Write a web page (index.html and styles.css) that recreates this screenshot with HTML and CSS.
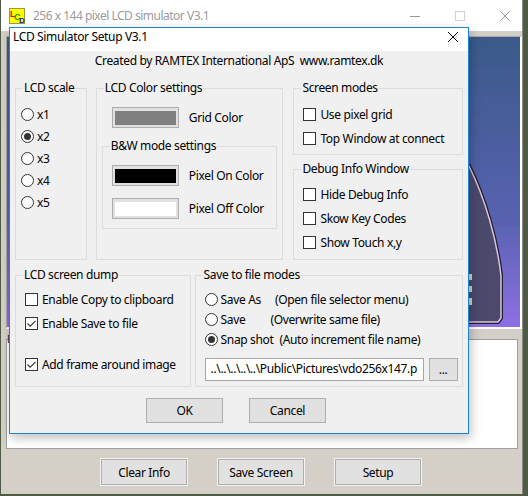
FILE: index.html
```html
<!DOCTYPE html>
<html lang="en">
<head>
<meta charset="utf-8">
<title>LCD Simulator Setup V3.1</title>
<link rel="stylesheet" href="styles.css">
</head>
<body>
<div class="app">
  <div class="app-title">
    <svg class="app-icon" width="16" height="16" viewBox="0 0 16 16">
      <rect x="0.5" y="0.5" width="15" height="15" fill="#ffff00" stroke="#9a9a40"/>
      <text x="1" y="9" font-size="9" font-weight="bold" fill="#e00000" font-family="Liberation Sans, sans-serif">L</text>
      <text x="5" y="12" font-size="9" font-weight="bold" fill="#00a000" font-family="Liberation Sans, sans-serif">C</text>
      <text x="10" y="15" font-size="8" font-weight="bold" fill="#1010e0" font-family="Liberation Sans, sans-serif">D</text>
    </svg>
    <span class="app-title-text">256 x 144 pixel LCD simulator V3.1</span>
    <div class="app-controls">
      <svg width="10" height="10" viewBox="0 0 10 10"><path d="M0 5.5H10" stroke="#9a9a9a" stroke-width="1"/></svg>
      <svg width="10" height="10" viewBox="0 0 10 10"><rect x="0.5" y="0.5" width="9" height="9" fill="none" stroke="#d0d0d0"/></svg>
      <svg width="10" height="10" viewBox="0 0 10 10"><path d="M0 0L10 10M10 0L0 10" stroke="#9a9a9a" stroke-width="1"/></svg>
    </div>
  </div>
  <div class="app-client">
    <div class="lcd">
      <svg class="lcd-img" width="513" height="290" viewBox="7 37 513 290" shape-rendering="crispEdges">
        <rect x="7" y="37" width="513" height="10" fill="#3b5a8b"/>
        <rect x="7" y="47" width="513" height="10" fill="#3d5b8d"/>
        <rect x="7" y="57" width="513" height="10" fill="#3e5b8f"/>
        <rect x="7" y="67" width="513" height="10" fill="#405c91"/>
        <rect x="7" y="77" width="513" height="10" fill="#415c93"/>
        <rect x="7" y="87" width="513" height="10" fill="#435c96"/>
        <rect x="7" y="97" width="513" height="10" fill="#455d98"/>
        <rect x="7" y="107" width="513" height="10" fill="#465d9a"/>
        <rect x="7" y="117" width="513" height="10" fill="#485e9c"/>
        <rect x="7" y="127" width="513" height="10" fill="#4a5e9e"/>
        <rect x="7" y="137" width="513" height="10" fill="#4b5fa0"/>
        <rect x="7" y="147" width="513" height="10" fill="#4d5fa2"/>
        <rect x="7" y="157" width="513" height="10" fill="#4e5fa4"/>
        <rect x="7" y="167" width="513" height="10" fill="#5060a6"/>
        <rect x="7" y="177" width="513" height="10" fill="#5260a8"/>
        <rect x="7" y="187" width="513" height="10" fill="#5361aa"/>
        <rect x="7" y="197" width="513" height="10" fill="#5561ac"/>
        <rect x="7" y="207" width="513" height="10" fill="#5762ae"/>
        <rect x="7" y="217" width="513" height="10" fill="#5962b1"/>
        <rect x="7" y="227" width="513" height="10" fill="#5e64b6"/>
        <rect x="7" y="237" width="513" height="10" fill="#6365bb"/>
        <rect x="7" y="247" width="513" height="10" fill="#6866c0"/>
        <rect x="7" y="257" width="513" height="10" fill="#6d68c4"/>
        <rect x="7" y="267" width="513" height="10" fill="#7269c9"/>
        <rect x="7" y="277" width="513" height="10" fill="#776ace"/>
        <rect x="7" y="287" width="513" height="10" fill="#7c6bd3"/>
        <rect x="7" y="297" width="513" height="10" fill="#816dd8"/>
        <rect x="7" y="307" width="513" height="10" fill="#866edd"/>
        <rect x="7" y="317" width="513" height="10" fill="#8b6fe2"/>
        <path d="M469 166 C485 198 497 240 501 276 L501 318 L498 322 L300 322 L300 166 Z" fill="#4c4a6c" stroke="#1e1e2e" stroke-width="4" shape-rendering="auto"/>
        <path d="M469 166 C485 198 497 240 501 276 L501 318 L498 322 L300 322 L300 166 Z" fill="#4c4a6c" stroke="#dcc4dc" stroke-width="1.5" shape-rendering="auto"/>
        <rect x="469" y="274" width="3" height="6" fill="#d8d0b4"/>
        <rect x="469" y="286" width="3" height="6" fill="#d8d0b4"/>
        <rect x="469" y="298" width="3" height="7" fill="#d8d0b4"/>
      </svg>
    </div>
    <div class="info-caption">D</div>
    <div class="info-box"></div>
    <div class="app-buttons">
      <button class="btn app-btn">Clear Info</button>
      <button class="btn app-btn">Save Screen</button>
      <button class="btn app-btn">Setup</button>
    </div>
  </div>
</div>

<div class="dialog">
  <div class="dlg-title">
    <span class="dlg-title-text">LCD Simulator Setup V3.1</span>
    <svg class="dlg-close" width="10" height="10" viewBox="0 0 10 10"><path d="M0 0L10 10M10 0L0 10" stroke="#000" stroke-width="1"/></svg>
  </div>
  <div class="dlg-body">
    <div class="credits">Created by RAMTEX International ApS&nbsp;&nbsp;www.ramtex.dk</div>

    <div class="row-top">
      <div class="group g-scale">
        <div class="gtitle">LCD scale</div>
        <div class="scale-list">
          <div class="opt"><span class="radio"></span>x1</div>
          <div class="opt"><span class="radio checked"></span>x2</div>
          <div class="opt"><span class="radio"></span>x3</div>
          <div class="opt"><span class="radio"></span>x4</div>
          <div class="opt"><span class="radio"></span>x5</div>
        </div>
      </div>

      <div class="group g-color">
        <div class="gtitle">LCD Color settings</div>
        <div class="swrow sw-first"><span class="swatch"><i class="fill-grid"></i></span><span>Grid Color</span></div>
        <div class="group g-bw">
          <div class="gtitle">B&amp;W mode settings</div>
          <div class="swrow sw-on"><span class="swatch"><i class="fill-on"></i></span><span>Pixel On Color</span></div>
          <div class="swrow sw-off"><span class="swatch"><i class="fill-off"></i></span><span>Pixel Off Color</span></div>
        </div>
      </div>

      <div class="col-right">
        <div class="group g-screen">
          <div class="gtitle">Screen modes</div>
          <div class="checks">
            <div class="chk"><span class="box"></span>Use pixel grid</div>
            <div class="chk"><span class="box"></span>Top Window at connect</div>
          </div>
        </div>
        <div class="group g-debug">
          <div class="gtitle">Debug Info Window</div>
          <div class="checks">
            <div class="chk"><span class="box"></span>Hide Debug Info</div>
            <div class="chk"><span class="box"></span>Skow Key Codes</div>
            <div class="chk"><span class="box"></span>Show Touch x,y</div>
          </div>
        </div>
      </div>
    </div>

    <div class="row-bottom">
      <div class="group g-dump">
        <div class="gtitle">LCD screen dump</div>
        <div class="checks">
          <div class="chk"><span class="box"></span>Enable Copy to clipboard</div>
          <div class="chk"><span class="box"><svg width="11" height="11" viewBox="0 0 11 11"><path d="M1.5 5.5L4.2 8.2L9.5 2.8" fill="none" stroke="#333" stroke-width="1.1"/></svg></span>Enable Save to file</div>
          <div class="chk chk-gap"><span class="box"><svg width="11" height="11" viewBox="0 0 11 11"><path d="M1.5 5.5L4.2 8.2L9.5 2.8" fill="none" stroke="#333" stroke-width="1.1"/></svg></span>Add frame around image</div>
        </div>
      </div>
      <div class="group g-save">
        <div class="gtitle">Save to file modes</div>
        <div class="save-list">
          <div class="sopt"><span class="radio"></span><span class="sname">Save As</span><span class="sdesc d1">(Open file selector menu)</span></div>
          <div class="sopt"><span class="radio"></span><span class="sname">Save</span><span class="sdesc d2">(Overwrite same file)</span></div>
          <div class="sopt"><span class="radio checked"></span><span class="sname">Snap shot</span><span class="sdesc d3">(Auto increment file name)</span></div>
        </div>
        <div class="path-row">
          <div class="path-field"><span class="path-text">..\..\..\..\..\Public\Pictures\vdo256x147.p</span></div>
          <button class="btn browse">...</button>
        </div>
      </div>
    </div>

    <div class="dlg-buttons">
      <button class="btn dlg-btn">OK</button>
      <button class="btn dlg-btn">Cancel</button>
    </div>
  </div>
</div>
</body>
</html>
```

FILE: styles.css
```css
* { box-sizing: border-box; margin: 0; padding: 0; }
html, body { width: 528px; height: 496px; overflow: hidden; }
body {
  background: #4e5a44;
  font-family: "Noto Sans", "Open Sans", sans-serif;
  font-size: 12px;
  letter-spacing: -0.35px;
  color: #000;
  position: relative;
}
button { font: inherit; color: inherit; letter-spacing: inherit; }

/* background application window */
.app {
  margin-left: 1px;
  width: 522px;
  height: 494px;
  background: #d4d0c8;
  border-right: 1px solid #8a8a8a;
}
.app-title {
  height: 31px;
  background: #fff;
  display: flex;
  align-items: center;
}
.app-icon { margin-left: 8px; flex: none; }
.app-title-text {
  margin-left: 8px;
  color: #9b9b9b;
  font-size: 12px;
  letter-spacing: -0.5px;
  line-height: 16px;
}
.app-controls {
  margin-left: auto;
  margin-right: 12px;
  display: flex;
  gap: 35px;
  align-items: center;
}
.app-client { padding: 5px 0 0 5px; }
.lcd {
  width: 516px;
  height: 293px;
  border-top: 1px solid #a8a8a8;
  border-left: 1px solid #a8a8a8;
  border-right: 2px solid #fff;
  border-bottom: 2px solid #fff;
  overflow: hidden;
  background: #3b5a8b;
}
.lcd-img { display: block; }
.info-caption {
  height: 0;
  overflow: visible;
  font-size: 10px;
  line-height: 10px;
  margin-top: 5px;
  padding-left: 1px;
  color: #222;
}
.info-box {
  margin-top: 5px;
  width: 512px;
  height: 110px;
  background: #fff;
  border: 1px solid #a0a0a0;
}
.app-buttons {
  margin-top: 10px;
  display: flex;
  gap: 31px;
  padding-left: 95px;
}
.btn {
  background: #e1e1e1;
  border: 1px solid #adadad;
  cursor: default;
}
.app-btn {
  width: 86px;
  height: 26px;
  box-shadow: 0 0 0 1px #f4f4f4;
}

/* dialog */
.dialog {
  position: absolute;
  left: 9px;
  top: 27px;
  width: 460px;
  height: 407px;
  border: 1px solid #1883d7;
  background: #f0f0f0;
  box-shadow: 2px 4px 10px rgba(0, 0, 0, 0.25);
}
.dlg-title {
  height: 23px;
  background: #fff;
  display: flex;
  align-items: flex-start;
  padding-left: 3px;
}
.dlg-title-text { line-height: 16px; margin-top: 1px; }
.dlg-close { margin-left: auto; margin-right: 10px; margin-top: 4px; }
.dlg-body { padding: 0 5px; }
.credits {
  padding-top: 2px;
  line-height: 16px;
  text-align: center;
}

.group { border: 1px solid #dcdcdc; }
.gtitle {
  margin-top: -9px;
  margin-left: 7px;
  width: fit-content;
  padding: 0 1px;
  line-height: 16px;
  height: 16px;
  background: #f0f0f0;
  white-space: nowrap;
}

.row-top {
  margin-top: 19px;
  display: flex;
  gap: 9px;
  height: 172px;
}
.g-scale { width: 72px; }
.g-color { width: 188px; }
.col-right {
  width: 170px;
  margin-left: 1px;
  display: flex;
  flex-direction: column;
  gap: 14px;
}
.g-screen { height: 67px; }
.g-debug { height: 91px; }

.scale-list { padding-top: 7px; padding-left: 5px; }
.opt { height: 22px; display: flex; align-items: center; }
.radio {
  width: 13px;
  height: 13px;
  border: 1px solid #333;
  border-radius: 50%;
  background: #fff;
  margin-right: 3px;
  flex: none;
  display: flex;
  align-items: center;
  justify-content: center;
}
.radio.checked::after {
  content: "";
  width: 7px;
  height: 7px;
  border-radius: 50%;
  background: #333;
}

.swrow { display: flex; align-items: center; gap: 10px; }
.sw-first { margin-top: 11px; padding-left: 15px; }
.swatch {
  width: 67px;
  height: 21px;
  border: 1px solid #adadad;
  background: #e1e1e1;
  padding: 3px 2px 2px;
  display: block;
  flex: none;
}
.swatch i { display: block; width: 100%; height: 100%; }
.fill-grid { background: #808080; }
.fill-on { background: #000; }
.fill-off { background: #fff; }

.g-bw { margin: 18px 5px 0; height: 83px; }
.g-bw .swrow { padding-left: 9px; }
.sw-on { margin-top: 11px; }
.sw-off { margin-top: 12px; }

.checks { padding-left: 9px; }
.chk { height: 24px; display: flex; align-items: center; }
.box {
  width: 13px;
  height: 13px;
  border: 1px solid #333;
  background: #fff;
  margin-right: 4px;
  flex: none;
  display: block;
}
.box svg { display: block; }
.g-screen .checks { margin-top: 6px; }
.g-debug .checks { margin-top: 5px; }

.row-bottom {
  margin-top: 15px;
  display: flex;
  gap: 4px;
  height: 112px;
}
.g-dump { width: 176px; }
.g-dump .checks { margin-top: 4px; }
.chk-gap { margin-top: 17px; }
.g-save { width: 269px; }
.save-list { margin-top: 6px; padding-left: 9px; }
.sopt { height: 20px; display: flex; align-items: center; white-space: nowrap; }
.sopt .radio { margin-right: 3px; }
.sname { display: inline-block; }
.d1 { margin-left: 14px; }
.d2 { margin-left: 25px; }
.d3 { margin-left: 6px; }
.path-row {
  margin-top: 9px;
  padding-left: 9px;
  display: flex;
  gap: 5px;
}
.path-field {
  width: 219px;
  height: 23px;
  background: #fff;
  border: 1px solid #a6a6a6;
  line-height: 20px;
  padding-left: 5px;
  white-space: nowrap;
  overflow: hidden;
}
.browse { width: 29px; height: 23px; line-height: 16px; }

.dlg-buttons {
  margin-top: 11px;
  display: flex;
  gap: 26px;
  padding-left: 131px;
}
.dlg-btn { width: 77px; height: 25px; }
```
